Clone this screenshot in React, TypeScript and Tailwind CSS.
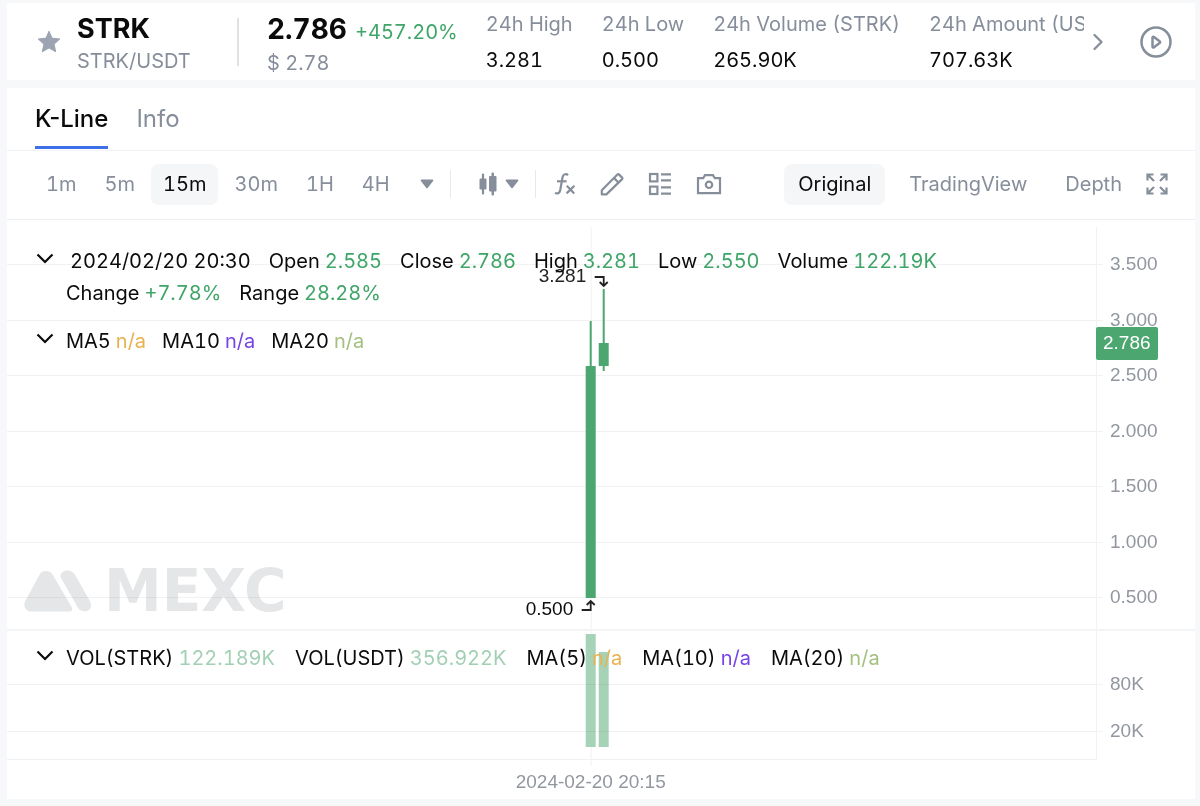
import React, { useState } from 'react';
import { ChevronRight } from 'lucide-react';

const stats = [
    { label: '24h High', value: '3.281' },
    { label: '24h Low', value: '0.500' },
    { label: '24h Volume (STRK)', value: '265.90K' },
    { label: '24h Amount (USDT)', value: '707.63K' },
];

const intervals = ['1m', '5m', '15m', '30m', '1H', '4H'];
const views = ['Original', 'TradingView', 'Depth'];

const ohlc = [
    { label: 'Open', value: '2.585' },
    { label: 'Close', value: '2.786' },
    { label: 'High', value: '3.281' },
    { label: 'Low', value: '2.550' },
    { label: 'Volume', value: '122.19K' },
];

const priceTicks = [
    { y: 44, label: '3.500' },
    { y: 100, label: '3.000' },
    { y: 155, label: '2.500' },
    { y: 211, label: '2.000' },
    { y: 266, label: '1.500' },
    { y: 322, label: '1.000' },
    { y: 377, label: '0.500' },
];

const volumeTicks = [
    { y: 464, label: '80K' },
    { y: 511, label: '20K' },
];

const ticks = [...priceTicks, ...volumeTicks];

function Caret() {
    return (
        <svg width="14" height="10" viewBox="0 0 14 10" fill="#868e9b" aria-hidden="true">
            <path d="M1.6 0.5h10.8c0.9 0 1.3 0.9 0.7 1.6L7.7 8.9c-0.4 0.5-1 0.5-1.4 0L0.9 2.1C0.3 1.4 0.7 0.5 1.6 0.5z" />
        </svg>
    );
}

function Star() {
    return (
        <svg width="24" height="24" viewBox="0 0 24 24" fill="#9ca3b3" stroke="#9ca3b3" strokeLinejoin="round" aria-hidden="true">
            <path d="M12 1.2l3.1 7 7.7.8-5.7 5.2 1.6 7.6-6.7-3.9-6.7 3.9 1.6-7.6L1.2 9l7.7-.8z" />
        </svg>
    );
}

function PlayIcon() {
    return (
        <svg width="32" height="32" viewBox="0 0 32 32" fill="none" stroke="#868e9b" aria-hidden="true">
            <circle cx="16" cy="16" r="14.5" strokeWidth="2.5" />
            <path d="M12.5 11.8v8.6c0 .9.8 1.3 1.5.9l5.6-4.2c.7-.5.7-1.3 0-1.8L14 10.9c-.7-.5-1.5 0-1.5.9z" strokeWidth="2.5" strokeLinejoin="round" />
        </svg>
    );
}

function CandleIcon() {
    return (
        <svg width="18" height="24" viewBox="0 0 18 24" fill="#868e9b" aria-hidden="true">
            <rect x="0.5" y="6.5" width="7" height="11" rx="1.2" />
            <rect x="2.9" y="1.5" width="2.2" height="21" rx="1" />
            <rect x="10" y="4" width="7.5" height="15.5" rx="1.2" />
            <rect x="12.5" y="0.5" width="2.5" height="23" rx="1" />
        </svg>
    );
}

function FxIcon() {
    return (
        <svg width="22" height="24" viewBox="0 0 22 24" fill="none" stroke="#868e9b" strokeWidth="2.2" aria-hidden="true">
            <path d="M14 3.2C12.6 1.6 9.2 1.8 8.6 5L6.2 18.2C5.7 21.2 3.2 22.2 1 20.9" />
            <path d="M3 9.3h9.6" />
            <path d="M12.8 13.8l7.4 7.6M20.4 13.8l-7.8 7.6" />
        </svg>
    );
}

function PencilIcon() {
    return (
        <svg width="24" height="24" viewBox="0 0 24 24" fill="none" stroke="#868e9b" strokeWidth="2.2" strokeLinejoin="round" aria-hidden="true">
            <path d="M1.8 22.4v-4.2L17.4 2.4c.5-.5 1-.5 1.5 0l3.2 3.2c.5.5.5 1 0 1.5L6.4 22.4z" />
            <path d="M14 6l4.6 4.6" />
        </svg>
    );
}

function LayoutIcon() {
    return (
        <svg width="24" height="24" viewBox="0 0 24 24" fill="none" stroke="#868e9b" strokeWidth="2.2" aria-hidden="true">
            <rect x="2" y="2" width="7.4" height="7.4" />
            <rect x="2" y="14.6" width="7.4" height="7.4" />
            <path d="M13 2.4h10M13 8.4h10M13 15.4h10M13 21.6h10" />
        </svg>
    );
}

function CameraIcon() {
    return (
        <svg width="26" height="24" viewBox="0 0 26 24" fill="none" stroke="#868e9b" strokeWidth="2.2" aria-hidden="true">
            <path d="M2 6.2h5.2L9 3.2h8l1.8 3h5.2v15H2z" />
            <circle cx="13" cy="12.8" r="3.2" />
        </svg>
    );
}

function ExpandIcon() {
    return (
        <svg width="22" height="22" viewBox="0 0 22 22" fill="none" stroke="#868e9b" strokeWidth="2.2" aria-hidden="true">
            <path d="M1.5 7.5v-6h6M1.5 1.5L8 8" />
            <path d="M14.5 1.5h6v6M20.5 1.5L14 8" />
            <path d="M1.5 14.5v6h6M1.5 20.5L8 14" />
            <path d="M14.5 20.5h6v-6M20.5 20.5L14 14" />
        </svg>
    );
}

function Toggle({ label }: { label: string }) {
    return (
        <button type="button" aria-label={label} className="flex h-7 w-5 shrink-0 items-center justify-center">
            <svg width="18" height="12" viewBox="0 0 18 12" fill="none" stroke="#0b0b0c" strokeWidth="2.2" aria-hidden="true">
                <path d="M1.5 1.5L9 9l7.5-7.5" />
            </svg>
        </button>
    );
}

function Legend({ label, value, color }: { label: string; value: string; color: string }) {
    return (
        <span className="flex gap-[5px] whitespace-nowrap">
            <span>{label}</span>
            <span className={color}>{value}</span>
        </span>
    );
}

function Header() {
    return (
        <header className="flex h-[77px] items-center bg-white pl-[30px] pr-[23px]">
            <button type="button" aria-label="Favorite">
                <Star />
            </button>
            <div className="ml-4 flex w-[162px] shrink-0 items-center justify-between">
                <div className="pt-1.5">
                    <h1 className="text-[27px] font-bold leading-8">STRK</h1>
                    <p className="text-xl leading-8 text-[#868e9b]">STRK/USDT</p>
                </div>
                <div className="h-12 w-0.5 bg-[#dfe1e5]" />
            </div>
            <div className="ml-7 shrink-0 pt-1.5">
                <div className="flex items-baseline gap-2 leading-9">
                    <span className="text-[28px] font-bold">2.786</span>
                    <span className="text-xl text-[#3fa568]">+457.20%</span>
                </div>
                <p className="text-xl leading-8 text-[#868e9b]">$ 2.78</p>
            </div>
            <dl className="ml-7 flex min-w-0 flex-1 gap-[29px] overflow-hidden">
                {stats.map((s) => (
                    <div key={s.label} className="shrink-0 whitespace-nowrap text-xl leading-9">
                        <dt className="text-[#868e9b]">{s.label}</dt>
                        <dd>{s.value}</dd>
                    </div>
                ))}
            </dl>
            <button type="button" aria-label="More stats" className="shrink-0 text-[#868e9b]">
                <ChevronRight size={28} />
            </button>
            <button type="button" aria-label="Play guide" className="ml-7 shrink-0">
                <PlayIcon />
            </button>
        </header>
    );
}

function Toolbar() {
    const [interval, setInterval] = useState('15m');
    const [view, setView] = useState('Original');

    return (
        <div className="flex h-[69px] items-center border-b border-[#eceef0] pb-0.5 pl-[27px] pr-[27px] text-xl text-[#868e9b]">
            <div className="flex gap-1">
                {intervals.map((i) => (
                    <button
                        key={i}
                        type="button"
                        onClick={() => setInterval(i)}
                        className={i === interval ? 'h-[41px] rounded-lg bg-[#f5f6f8] px-3 text-[#0b0b0c]' : 'h-[41px] px-3'}
                    >
                        {i}
                    </button>
                ))}
            </div>
            <button type="button" aria-label="More intervals" className="ml-[18px]">
                <Caret />
            </button>
            <div className="ml-4 h-7 w-px bg-[#e6e8eb]" />
            <button type="button" aria-label="Chart type" className="ml-7 flex items-center gap-2">
                <CandleIcon />
                <Caret />
            </button>
            <div className="ml-4 h-7 w-px bg-[#e6e8eb]" />
            <div className="ml-[18px] flex items-center gap-6">
                <button type="button" aria-label="Indicators"><FxIcon /></button>
                <button type="button" aria-label="Draw"><PencilIcon /></button>
                <button type="button" aria-label="Layout"><LayoutIcon /></button>
                <button type="button" aria-label="Screenshot"><CameraIcon /></button>
            </div>
            <div className="ml-auto flex gap-2.5">
                {views.map((v) => (
                    <button
                        key={v}
                        type="button"
                        onClick={() => setView(v)}
                        className={v === view ? 'h-[41px] rounded-lg bg-[#f5f6f8] px-3.5 text-[#0b0b0c]' : 'h-[41px] px-3.5'}
                    >
                        {v}
                    </button>
                ))}
            </div>
            <button type="button" aria-label="Full screen" className="ml-2.5">
                <ExpandIcon />
            </button>
        </div>
    );
}

// Plot: grid, candles and volume bars. Candles hang off one anchor that follows the width.
function Plot() {
    return (
        <svg width="100%" height="579" className="block overflow-visible font-['Liberation_Sans',sans-serif] text-[19px]">
            <rect x="53.6%" y="7" width="1" height="539" fill="#f1f2f4" />
            <svg x="53.6%" y="0" overflow="visible">
                <g fill="#a6d3b8">
                    <rect x="-5" y="414" width="10" height="113" />
                    <rect x="8" y="432" width="10" height="95" />
                </g>
            </svg>
            {ticks.map((t) => (
                <g key={t.label} fill="#000" fillOpacity="0.05">
                    <rect x="0" y={t.y} width="100%" height="1" />
                    <rect x="100%" y={t.y} width="7" height="1" />
                </g>
            ))}
            <rect x="0" y="539" width="100%" height="1" fill="#f1f2f4" />
            <svg x="53.6%" y="0" overflow="visible">
                <g fill="#4ca66f">
                    <rect x="-1" y="101" width="2" height="45" />
                    <rect x="-5" y="146" width="10" height="232" />
                    <rect x="12" y="69" width="2" height="82" />
                    <rect x="8" y="123" width="10" height="23" />
                </g>
                <g fill="none" stroke="#222" strokeWidth="1.8">
                    <path d="M4 57h9v9M9 62l4 4 4-4" />
                    <path d="M-9 390h9v-9M-4 385l4-4 4 4" />
                </g>
                <text x="-52" y="62" fill="#222">3.281</text>
                <text x="-65" y="395" fill="#0b0b0c">0.500</text>
                <text x="0" y="568" textAnchor="middle" fill="#92979f">2024-02-20 20:15</text>
            </svg>
        </svg>
    );
}

function Axis() {
    return (
        <svg width="99" height="579" className="block shrink-0 font-['Liberation_Sans',sans-serif] text-[19px]">
            <rect x="0" y="7" width="1" height="533" fill="#f1f2f4" />
            {ticks.map((t) => (
                <text key={t.label} x="14" y={t.y + 6} fill="#92979f">{t.label}</text>
            ))}
            <rect x="0" y="107" width="62" height="33" rx="2" fill="#4ca66f" />
            <text x="7" y="129" fill="#fff">2.786</text>
        </svg>
    );
}

function Watermark() {
    return (
        <div className="flex items-center gap-3 text-[#e4e6e8]">
            <svg width="68" height="42" viewBox="0 0 68 42" fill="currentColor" aria-hidden="true">
                <path d="M15.8 4.2C18.2 0 25.6-.2 28.4 4.2L47.6 37c1.5 2.6.2 4.6-2.4 4.6H7.4C1.8 41.6-1.2 36.4 1.2 31z" />
                <path d="M37 8c-3-7 9.4-10.8 14-3.2l15 26.4c4.8 8.6-7 14.2-12.2 6.4z" />
            </svg>
            <span className="font-['DejaVu_Sans',sans-serif] text-[58px] font-bold leading-[42px]">MEXC</span>
        </div>
    );
}

function Chart() {
    return (
        <div className="relative">
            <div className="flex">
                <div className="min-w-0 flex-1">
                    <Plot />
                </div>
                <Axis />
            </div>
            <div className="absolute inset-x-0 top-[409px] h-0.5 bg-[#f3f4f5]" />
            <div className="absolute left-[17px] top-[350px] mix-blend-multiply">
                <Watermark />
            </div>
            <div className="absolute left-7 right-[99px] top-[25px] flex gap-[11px] text-xl leading-8">
                <Toggle label="Collapse price legend" />
                <div className="flex flex-wrap gap-x-[18px]">
                    <span className="pl-1">2024/02/20 20:30</span>
                    {ohlc.map((o) => (
                        <Legend key={o.label} label={o.label} value={o.value} color="text-[#3fa568]" />
                    ))}
                    <span className="basis-full" />
                    <Legend label="Change" value="+7.78%" color="text-[#3fa568]" />
                    <Legend label="Range" value="28.28%" color="text-[#3fa568]" />
                </div>
            </div>
            <div className="absolute left-7 top-[105px] flex gap-[11px] text-xl leading-8">
                <Toggle label="Collapse moving averages" />
                <div className="flex gap-4">
                    <Legend label="MA5" value="n/a" color="text-[#e9b14f]" />
                    <Legend label="MA10" value="n/a" color="text-[#7543e8]" />
                    <Legend label="MA20" value="n/a" color="text-[#a3c07e]" />
                </div>
            </div>
            <div className="absolute left-7 top-[422px] flex gap-[11px] text-xl leading-8">
                <Toggle label="Collapse volume legend" />
                <div className="flex gap-5">
                    <Legend label="VOL(STRK)" value="122.189K" color="text-[#a3d0b5]" />
                    <Legend label="VOL(USDT)" value="356.922K" color="text-[#a3d0b5]" />
                    <Legend label="MA(5)" value="n/a" color="text-[#e9b14f]" />
                    <Legend label="MA(10)" value="n/a" color="text-[#7543e8]" />
                    <Legend label="MA(20)" value="n/a" color="text-[#a3c07e]" />
                </div>
            </div>
        </div>
    );
}

export default function App() {
    return (
        <main className="min-h-screen bg-[#f6f8fa] pb-[7px] pl-[7px] pr-[5px] pt-[3px] font-['Inter',sans-serif] tabular-nums text-[#0b0b0c]">
            <Header />
            <section className="mt-2 bg-white">
                <nav className="flex h-[63px] items-start gap-7 border-b border-[#f1f2f4] px-7 text-2xl proportional-nums">
                    <a href="#kline" className="h-[61px] border-b-[3px] border-[#3d6fe8] font-medium leading-[62px]">K-Line</a>
                    <a href="#info" className="leading-[62px] text-[#868e9b]">Info</a>
                </nav>
                <Toolbar />
                <Chart />
            </section>
        </main>
    );
}
